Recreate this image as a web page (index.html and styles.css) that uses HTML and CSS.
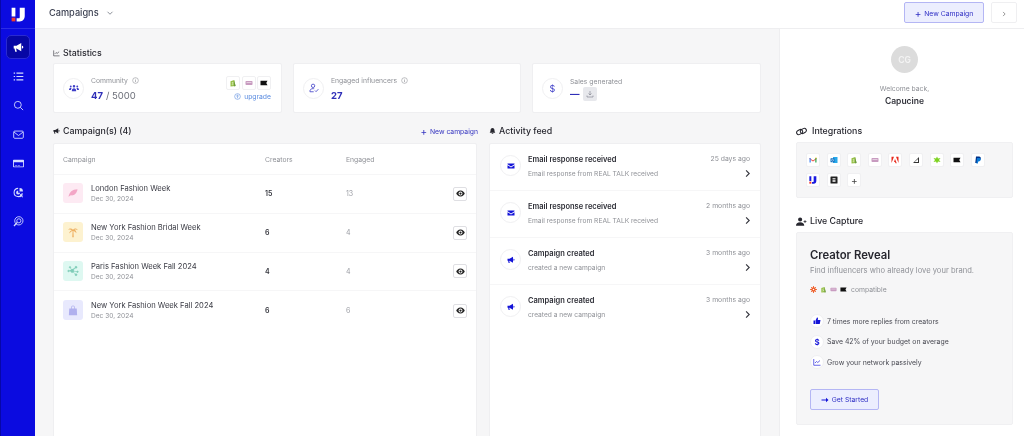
FILE: index.html
```html
<!DOCTYPE html>
<html lang="en">
<head>
  <meta charset="UTF-8">
  <meta name="viewport" content="width=device-width, initial-scale=1.0">
  <title>Campaigns</title>
  <link rel="stylesheet" href="styles.css">
</head>
<body>
  <svg class="sprite" width="0" height="0">
    <symbol id="i-mega" viewBox="0 0 16 16"><path fill="currentColor" d="M1 5.500h4l7-4v12l-7-4H4.500l1 4.500H3.200l-1-4.500H1zM13 5.500a2 2 0 0 1 0 4z"/></symbol>
    <symbol id="i-mail" viewBox="0 0 16 16"><path fill="currentColor" d="M1 3h14v1.500L8 9 1 4.500zM1 6.300l7 4.500 7-4.500V13H1z"/></symbol>
    <symbol id="i-eye" viewBox="0 0 16 16"><path fill="currentColor" fill-rule="evenodd" d="M8 2.500c4 0 7.500 4 7.500 5.500s-3.500 5.500-7.500 5.500S.5 9.500.5 8 4 2.500 8 2.500zm0 2a3.500 3.500 0 1 0 0 7 3.500 3.500 0 0 0 0-7zm0 1.500a2 2 0 1 1 0 4 2 2 0 0 1 0-4z"/></symbol>
    <symbol id="i-chev" viewBox="0 0 16 16"><path fill="none" stroke="currentColor" stroke-width="2" d="M5.500 2.500 11 8l-5.500 5.500"/></symbol>
    <symbol id="i-info" viewBox="0 0 16 16"><circle cx="8" cy="8" r="6.500" fill="none" stroke="currentColor" stroke-width="1.300"/><path stroke="currentColor" stroke-width="1.500" d="M8 7v4.500M8 4.200v1.500"/></symbol>
    <symbol id="i-shop" viewBox="0 0 16 16"><path fill="#95bf47" d="M3 4.500 10.500 2l2.500 12-10 1z"/><path fill="#5e8e3e" d="M10.500 2 13 14l-2.500 1z"/><path fill="none" stroke="#fff" stroke-width="1.200" d="M8.500 7C7 6.300 6 7 6.500 8s2 1 1.500 2.500-2 1-2.500.5"/></symbol>
    <symbol id="i-woo" viewBox="0 0 16 16"><rect x="1" y="4" width="14" height="8" rx="1.500" fill="#c89bc0"/><path stroke="#fff" d="M3 7h10"/></symbol>
    <symbol id="i-black" viewBox="0 0 16 16"><path fill="#111" d="M1 3.500h14l-2.500 4.500 2.500 4.500H1z"/></symbol>
    <symbol id="i-logo" viewBox="0 0 24 24"><path fill="currentColor" d="M1 1h6v14H1zM14 1h8v13c0 5-3 9-8 9H9v-5h3c2 0 2-1 2-3z"/><rect x="1" y="17" width="6" height="6" fill="#f03a2e"/></symbol>
  </svg>

  <div class="app">
    <nav class="sidebar">
      <div class="logo"><svg class="logo-mark"><use href="#i-logo"/></svg></div>
      <a class="nav-item active"><svg><use href="#i-mega"/></svg></a>
      <a class="nav-item"><svg viewBox="0 0 16 16"><path stroke="currentColor" stroke-width="1.700" d="M5 3h10M5 8h10M5 13h10M1 3h2M1 8h2M1 13h2"/></svg></a>
      <a class="nav-item"><svg viewBox="0 0 16 16" fill="none" stroke="currentColor" stroke-width="1.300"><circle cx="7" cy="7" r="5"/><path d="m10.700 10.700 4 4"/></svg></a>
      <a class="nav-item"><svg viewBox="0 0 16 16" fill="none" stroke="currentColor" stroke-width="1.300"><rect x="1" y="3" width="14" height="10.500" rx="1.500"/><path d="m1.500 4.500 6.500 5 6.500-5"/></svg></a>
      <a class="nav-item"><svg viewBox="0 0 16 16"><path fill="currentColor" fill-rule="evenodd" d="M1 2.500h14a1 1 0 0 1 1 1v9a1 1 0 0 1-1 1H1a1 1 0 0 1-1-1v-9a1 1 0 0 1 1-1zM1.300 6v6.200h13.400V6zM3 10h3v1H3zM7 10h3v1H7z"/></svg></a>
      <a class="nav-item"><svg viewBox="0 0 16 16"><path fill="none" stroke="currentColor" stroke-width="1.500" d="M7.500 2a6 6 0 1 0 6 7"/><path fill="currentColor" d="M7.500 5a3 3 0 1 0 3 3.500h-3zM9.500 1.500a5 5 0 0 1 5 5h-5zM10 10l5 1.500-2 1 1.500 2-1 .8-1.500-2-1.200 2z"/></svg></a>
      <a class="nav-item"><svg viewBox="0 0 16 16" fill="none" stroke="currentColor" stroke-width="1.300"><circle cx="8.500" cy="7" r="6"/><circle cx="8.500" cy="7" r="3"/><path stroke-width="1.800" d="m6 9.500-4.500 5"/></svg></a>
    </nav>

    <div class="content">
      <header class="topbar">
        <div class="page-title">Campaigns <svg class="caret" viewBox="0 0 16 16"><path fill="none" stroke="currentColor" stroke-width="1.500" d="m3 5.500 5 5 5-5"/></svg></div>
        <div class="top-actions">
          <button class="btn-primary top-new"><span class="plus">+</span> New Campaign</button>
          <button class="btn-next"><svg viewBox="0 0 16 16"><use href="#i-chev"/></svg></button>
        </div>
      </header>

      <div class="columns">
        <main class="main">
          <h2 class="heading"><svg viewBox="0 0 16 16" fill="none" stroke="currentColor" stroke-width="1.300"><path d="M1.500 2v12.500H15"/><path d="m4 10 3-3 2.500 2L14 5"/></svg> Statistics</h2>
          <section class="stats">
            <div class="stat-card">
              <span class="round-icon"><svg viewBox="0 0 16 16"><path fill="currentColor" d="M8 3a2 2 0 1 1 0 4 2 2 0 0 1 0-4zM4.500 13c0-3 1.500-4.500 3.500-4.500s3.500 1.500 3.500 4.500zM2.800 4a1.500 1.500 0 1 1 0 3 1.500 1.500 0 0 1 0-3zM13.200 4a1.500 1.500 0 1 1 0 3 1.500 1.500 0 0 1 0-3zM0 11c0-2 1-3 2.800-3 .5 0 1 .1 1.300.3-.6.7-.9 1.700-.9 2.700zM16 11c0-2-1-3-2.800-3-.5 0-1 .1-1.300.3.600.7.900 1.700.900 2.700z"/></svg></span>
              <div class="stat-text">
                <div class="stat-label">Community <svg class="info"><use href="#i-info"/></svg></div>
                <div class="stat-value"><b>47</b> <span>/ 5000</span></div>
              </div>
              <div class="stat-extra">
                <div class="mini-icons">
                  <span class="tile"><svg><use href="#i-shop"/></svg></span>
                  <span class="tile"><svg><use href="#i-woo"/></svg></span>
                  <span class="tile"><svg><use href="#i-black"/></svg></span>
                </div>
                <a class="upgrade"><svg viewBox="0 0 16 16" fill="none" stroke="currentColor" stroke-width="1.300"><circle cx="8" cy="8" r="6.500"/><path d="M8 12V5M5 7.500 8 4.700l3 2.800"/></svg> upgrade</a>
              </div>
            </div>
            <div class="stat-card">
              <span class="round-icon"><svg viewBox="0 0 16 16" fill="none" stroke="currentColor" stroke-width="1.300"><circle cx="6.500" cy="4.500" r="2.700"/><path d="M1.500 14v-1c0-2.500 2-4 5-4 .8 0 1.300.1 1.800.2M1.500 14h6M9.500 12l1.800 1.800 3.700-4"/></svg></span>
              <div class="stat-text">
                <div class="stat-label">Engaged influencers <svg class="info"><use href="#i-info"/></svg></div>
                <div class="stat-value"><b>27</b></div>
              </div>
            </div>
            <div class="stat-card">
              <span class="round-icon">$</span>
              <div class="stat-text">
                <div class="stat-label">Sales generated</div>
                <div class="stat-value sales"><b>—</b> <span class="sales-tile"><svg viewBox="0 0 16 16" fill="none" stroke="currentColor" stroke-width="1.300"><path d="M8 2v8M5 7l3 3 3-3M2 11v3h12v-3"/></svg></span></div>
              </div>
            </div>
          </section>

          <div class="lists">
            <section class="list-col">
              <div class="list-head">
                <h2 class="heading"><svg><use href="#i-mega"/></svg> Campaign(s) (4)</h2>
                <a class="new-link"><span class="plus">+</span> New campaign</a>
              </div>
              <div class="panel campaigns">
                <div class="row row-head">
                  <span>Campaign</span><span>Creators</span><span>Engaged</span><span></span>
                </div>
                <div class="row">
                  <div class="camp"><span class="thumb pink"><svg viewBox="0 0 16 16"><path fill="currentColor" d="M2 13c1-6 5-10 12-10-1 6-5 9-9 8z"/></svg></span><div><div class="camp-name">London Fashion Week</div><div class="camp-date">Dec 30, 2024</div></div></div>
                  <b>15</b><span class="muted">13</span><span class="eye"><svg><use href="#i-eye"/></svg></span>
                </div>
                <div class="row">
                  <div class="camp"><span class="thumb yellow"><svg viewBox="0 0 16 16"><path fill="currentColor" d="M8 5C6 2.500 3 3 1.500 5c2-.5 3.500-.5 5 .5C4.500 6 3 8 3 10c1.200-2 2.800-3 4.500-3.500L7 15h2l-.5-8.500c1.500.5 3 1.500 4 3 .2-2-1-3.800-2.500-4.500 1.500-.5 3-.3 4.500.5C13 3 10 2.500 8 5z"/></svg></span><div><div class="camp-name">New York Fashion Bridal Week</div><div class="camp-date">Dec 30, 2024</div></div></div>
                  <b>6</b><span class="muted">4</span><span class="eye"><svg><use href="#i-eye"/></svg></span>
                </div>
                <div class="row">
                  <div class="camp"><span class="thumb mint"><svg viewBox="0 0 16 16" fill="currentColor" stroke="currentColor" stroke-width=".8"><circle cx="7" cy="8" r="2"/><circle cx="2" cy="8" r="1"/><circle cx="12" cy="3" r="1.300"/><circle cx="14" cy="9" r="1"/><circle cx="12" cy="13" r="1.300"/><circle cx="4" cy="3" r="1"/><path d="M2 8h5l5-5M7 8l7 1M7 8l5 5M7 8 4 3"/></svg></span><div><div class="camp-name">Paris Fashion Week Fall 2024</div><div class="camp-date">Dec 30, 2024</div></div></div>
                  <b>4</b><span class="muted">4</span><span class="eye"><svg><use href="#i-eye"/></svg></span>
                </div>
                <div class="row">
                  <div class="camp"><span class="thumb lilac"><svg viewBox="0 0 16 16"><path fill="currentColor" d="M3 6h2.500V4.500a2.500 2.500 0 0 1 5 0V6H13l.5 9h-11zM6.500 6h3V4.500a1.500 1.500 0 0 0-3 0z"/></svg></span><div><div class="camp-name">New York Fashion Week Fall 2024</div><div class="camp-date">Dec 30, 2024</div></div></div>
                  <b>6</b><span class="muted">6</span><span class="eye"><svg><use href="#i-eye"/></svg></span>
                </div>
              </div>
            </section>

            <section class="feed-col">
              <div class="list-head">
                <h2 class="heading"><svg viewBox="0 0 16 16"><path fill="currentColor" d="M8 1c3 0 4.500 2.500 4.500 5 0 3 1 4.500 2 6H1.500c1-1.500 2-3 2-6C3.500 3.500 5 1 8 1zM6 13h4a2 2 0 0 1-4 0z"/></svg> Activity feed</h2>
              </div>
              <div class="panel feed">
                <div class="feed-row">
                  <span class="round-icon blue"><svg><use href="#i-mail"/></svg></span>
                  <div class="feed-text"><div class="feed-title">Email response received</div><div class="feed-sub">Email response from REAL TALK received</div></div>
                  <div class="feed-meta"><span>25 days ago</span><svg><use href="#i-chev"/></svg></div>
                </div>
                <div class="feed-row">
                  <span class="round-icon blue"><svg><use href="#i-mail"/></svg></span>
                  <div class="feed-text"><div class="feed-title">Email response received</div><div class="feed-sub">Email response from REAL TALK received</div></div>
                  <div class="feed-meta"><span>2 months ago</span><svg><use href="#i-chev"/></svg></div>
                </div>
                <div class="feed-row">
                  <span class="round-icon blue"><svg><use href="#i-mega"/></svg></span>
                  <div class="feed-text"><div class="feed-title">Campaign created</div><div class="feed-sub">created a new campaign</div></div>
                  <div class="feed-meta"><span>3 months ago</span><svg><use href="#i-chev"/></svg></div>
                </div>
                <div class="feed-row">
                  <span class="round-icon blue"><svg><use href="#i-mega"/></svg></span>
                  <div class="feed-text"><div class="feed-title">Campaign created</div><div class="feed-sub">created a new campaign</div></div>
                  <div class="feed-meta"><span>3 months ago</span><svg><use href="#i-chev"/></svg></div>
                </div>
              </div>
            </section>
          </div>
        </main>

        <aside class="aside">
          <div class="welcome">
            <div class="avatar">CG</div>
            <div class="welcome-text">Welcome back,</div>
            <div class="welcome-name">Capucine</div>
          </div>

          <h2 class="heading link-head"><svg viewBox="0 0 16 16" fill="none" stroke="currentColor" stroke-width="1.500"><rect x=".8" y="6" width="9" height="6" rx="3" transform="rotate(-30 5 9)"/><rect x="6.200" y="4" width="9" height="6" rx="3" transform="rotate(-30 11 7)"/></svg> Integrations</h2>
          <div class="box integrations">
            <span class="tile"><svg viewBox="0 0 16 16"><path fill="#ea4335" d="M1 4l7 5 7-5v2l-7 5-7-5z"/><path fill="#4285f4" d="M1 4h2.500v9H1z"/><path fill="#34a853" d="M12.500 4H15v9h-2.500z"/><path fill="#fbbc04" d="M13 3h2v2h-2z"/></svg></span>
            <span class="tile"><svg viewBox="0 0 16 16"><path fill="#28a8ea" d="M6 2h9v12H6z"/><rect x="1" y="4.500" width="8" height="8" rx="1" fill="#0f6cbd"/><circle cx="5" cy="8.500" r="2" fill="none" stroke="#fff"/></svg></span>
            <span class="tile"><svg><use href="#i-shop"/></svg></span>
            <span class="tile"><svg><use href="#i-woo"/></svg></span>
            <span class="tile"><svg viewBox="0 0 16 16"><path fill="#e8291c" d="M1 1.500h5L1 14zM10 1.500h5V14zM8 6l3.500 8.500H9L8 12H6z"/></svg></span>
            <span class="tile"><svg viewBox="0 0 16 16"><path fill="#333" d="M14 2v12H2zM5 12h7V6z" fill-rule="evenodd"/></svg></span>
            <span class="tile"><svg viewBox="0 0 16 16"><path fill="#7ed321" d="M8 1l2 4 5-1-3 4 3 4-5-1-2 4-2-4-5 1 3-4-3-4 5 1z"/></svg></span>
            <span class="tile"><svg><use href="#i-black"/></svg></span>
            <span class="tile"><svg viewBox="0 0 16 16"><path fill="#003087" d="M4 1h6c3 0 4 2 3.500 4S11 9 8.500 9H6.800L6 14H2.500z"/><path fill="#0a79d6" d="M6 4h5c2.500 0 3 1.500 2.600 3.200S11.500 11 9.500 11H8.300l-.6 4H4.800z"/></svg></span>
            <span class="tile logo-tile"><svg><use href="#i-logo"/></svg></span>
            <span class="tile"><svg viewBox="0 0 16 16"><rect x="1" y="1" width="14" height="14" rx="1" fill="#222"/><path fill="#fff" d="M5 4h6v3H5zM5 8h6v4H5z" opacity=".75"/></svg></span>
            <span class="tile tile-plus">+</span>
          </div>

          <h2 class="heading capture-head"><svg viewBox="0 0 16 16"><path fill="currentColor" d="M6 2a3 3 0 1 1 0 6 3 3 0 0 1 0-6zM0 14c0-3 2-5 6-5s6 2 6 5zM12.500 6h1.200v1.500h1.500v1.100h-1.500v1.500h-1.200V8.600H11V7.500h1.500z"/></svg> Live Capture</h2>
          <div class="box reveal">
            <div class="reveal-title">Creator Reveal</div>
            <div class="reveal-sub">Find influencers who already love your brand.</div>
            <div class="compat">
              <svg viewBox="0 0 16 16"><path stroke="#ee5a24" stroke-width="2" d="M8 0v16M0 8h16M2.500 2.500l11 11M13.500 2.500l-11 11"/><circle cx="8" cy="8" r="5" fill="#ee5a24"/><circle cx="8" cy="8" r="1.800" fill="#fff"/></svg>
              <svg><use href="#i-shop"/></svg>
              <svg><use href="#i-woo"/></svg>
              <svg><use href="#i-black"/></svg>
              <span>compatible</span>
            </div>
            <ul class="perks">
              <li><span class="round-icon blue"><svg viewBox="0 0 16 16"><path fill="currentColor" d="M1 7h3v7H1zM5 7l3-6c1.500 0 2 1 2 2l-.5 3H15l-1.500 8H5z"/></svg></span> 7 times more replies from creators</li>
              <li><span class="round-icon blue dollar">$</span> Save 42% of your budget on average</li>
              <li><span class="round-icon blue"><svg viewBox="0 0 16 16" fill="none" stroke="currentColor" stroke-width="1.300"><path d="M1.500 2v12.500H15"/><path d="m4 10 3-3 2.500 2L14 5"/></svg></span> Grow your network passively</li>
            </ul>
            <button class="btn-primary start"><svg viewBox="0 0 16 16"><path fill="currentColor" d="M1 7h9V3.500L15 8l-5 4.500V9H1z"/></svg> Get Started</button>
          </div>
        </aside>
      </div>
    </div>
  </div>
</body>
</html>
```

FILE: styles.css
```css
* {
  box-sizing: border-box;
}
body {
  margin: 0;
  height: 436px;
  overflow: hidden;
  font-family: 'Inter', 'Liberation Sans', sans-serif;
  color: #27272f;
  background: #fff;
}
.sprite {
  position: absolute;
}
h2 {
  margin: 0;
}
.app {
  display: flex;
  height: 436px;
  filter: blur(.3px);
  will-change: transform;
}

/* sidebar */
.sidebar {
  width: 35px;
  flex: none;
  background: #0b0be0;
  border-left: 1px solid #0707a8;
  display: flex;
  flex-direction: column;
  align-items: center;
  color: #d5dcff;
}
.logo {
  width: 100%;
  height: 29px;
  border-bottom: 1px solid #2c2ce6;
  display: flex;
  align-items: center;
  justify-content: center;
  margin-bottom: 6px;
}
.logo-mark {
  width: 15px;
  height: 15px;
  color: #fff;
}
.nav-item {
  width: 24px;
  height: 24px;
  margin-bottom: 5px;
  display: flex;
  align-items: center;
  justify-content: center;
  border-radius: 5px;
  border: 1px solid transparent;
}
.nav-item svg {
  width: 11px;
  height: 11px;
}
.nav-item.active {
  background: #0707a5;
  border-color: #2a2ad0;
  color: #fff;
}

/* top bar */
.content {
  flex: 1;
  display: flex;
  flex-direction: column;
  min-width: 0;
}
.topbar {
  height: 29px;
  flex: none;
  border-bottom: 1px solid #eeeef0;
  display: flex;
  align-items: flex-start;
  justify-content: space-between;
  padding: 2px 7px 0 14px;
}
.page-title {
  height: 21px;
  font-size: 9.200px;
  font-weight: 500;
  color: #3a3f50;
  display: flex;
  align-items: center;
  gap: 7px;
}
.caret {
  width: 8px;
  height: 8px;
  color: #666b78;
}
.top-actions {
  display: flex;
  gap: 7px;
}
.btn-primary {
  font-family: inherit;
  font-size: 6.800px;
  color: #2f2fc4;
  background: #eceefe;
  border: 1px solid #b4b6f4;
  border-radius: 2px;
}
.top-new {
  width: 80px;
  height: 21px;
  padding: 0;
}
.plus {
  font-size: 10px;
  line-height: 1;
  vertical-align: -1px;
  margin-right: 1px;
}
.btn-next {
  width: 26px;
  height: 21px;
  padding: 0;
  background: #fff;
  border: 1px solid #efeff1;
  border-radius: 2px;
  color: #777;
}
.btn-next svg {
  width: 6px;
  height: 6px;
}

/* main column */
.columns {
  flex: 1;
  display: flex;
  min-height: 0;
}
.main {
  width: 744px;
  flex: none;
  background: #f6f6f7;
  padding: 18px 18px 0 18px;
  display: flex;
  flex-direction: column;
  overflow: hidden;
}
.heading {
  font-size: 8.800px;
  font-weight: 500;
  color: #27272f;
  display: flex;
  align-items: center;
  gap: 3px;
  line-height: 12px;
}
.heading svg {
  width: 7px;
  height: 8px;
}
.stats {
  display: grid;
  grid-template-columns: 229px 228px 229px;
  gap: 11px;
  margin-top: 4px;
}
.stat-card {
  height: 50px;
  background: #fff;
  border: 1px solid #efeff1;
  border-radius: 2px;
  display: flex;
  align-items: center;
  padding: 0 10px 0 9px;
  gap: 7px;
}
.round-icon {
  width: 21px;
  height: 21px;
  flex: none;
  border-radius: 50%;
  border: 1px solid #f0f0f2;
  background: #fff;
  display: flex;
  align-items: center;
  justify-content: center;
  color: #3f3fc8;
  font-size: 9px;
}
.round-icon svg {
  width: 10px;
  height: 10px;
}
.stat-text {
  flex: 1;
  padding-top: 1px;
}
.stat-label {
  font-size: 6.800px;
  color: #8f9197;
  display: flex;
  align-items: center;
  gap: 4px;
  line-height: 10px;
}
.info {
  width: 7px;
  height: 7px;
}
.stat-value {
  margin-top: 3px;
  font-size: 9.500px;
  line-height: 13px;
  color: #6b6e78;
  display: flex;
  gap: 3px;
  align-items: center;
}
.stat-value b {
  color: #2f2fb8;
  font-weight: 700;
}
.sales-tile {
  width: 14px;
  height: 14px;
  background: #e7e8ec;
  border-radius: 2px;
  display: flex;
  align-items: center;
  justify-content: center;
  color: #80838e;
}
.sales-tile svg {
  width: 8px;
  height: 8px;
}
.sales {
  margin-top: 0;
}
.stat-extra {
  display: flex;
  flex-direction: column;
  align-items: flex-end;
  gap: 2px;
}
.mini-icons {
  display: flex;
  gap: 1.500px;
}
.tile {
  width: 14px;
  height: 14px;
  background: #fff;
  border: 1px solid #f0f0f2;
  border-radius: 2px;
  display: flex;
  align-items: center;
  justify-content: center;
}
.tile svg {
  width: 8px;
  height: 8px;
}
.upgrade {
  font-size: 6.800px;
  color: #5b8ce0;
  display: flex;
  align-items: center;
  gap: 3px;
}
.upgrade svg {
  width: 7px;
  height: 7px;
}

/* lists */
.lists {
  display: flex;
  gap: 12px;
  margin-top: 12px;
  margin-bottom: -6px;
  flex: 1;
  min-height: 0;
}
.list-col {
  width: 424px;
  flex: none;
  display: flex;
  flex-direction: column;
}
.feed-col {
  flex: 1;
  display: flex;
  flex-direction: column;
}
.list-head {
  height: 12px;
  display: flex;
  align-items: center;
  justify-content: space-between;
  margin-bottom: 6px;
}
.new-link {
  font-size: 6.800px;
  color: #3434c0;
  margin-right: -1px;
}
.panel {
  flex: 1;
  background: #fff;
  border: 1px solid #efeff1;
  border-radius: 2px;
}
.row {
  display: grid;
  grid-template-columns: 202px 81px 1fr 24px;
  align-items: center;
  height: 38.800px;
  padding: 0 9px;
  font-size: 7px;
  color: #33343c;
  border-bottom: 1px solid #f6f6f7;
}
.row:last-child {
  border-bottom: none;
}
.row-head {
  height: 31px;
  color: #8f9197;
  font-size: 6.800px;
}
.row b {
  font-weight: 600;
}
.muted {
  color: #9a9ca3;
}
.camp {
  display: flex;
  align-items: center;
  gap: 8px;
}
.thumb {
  width: 20px;
  height: 20px;
  margin-top: -1px;
  border-radius: 3px;
  display: flex;
  align-items: center;
  justify-content: center;
}
.thumb svg {
  width: 12px;
  height: 12px;
}
.pink {
  background: #fdeaf3;
  color: #f3a6c6;
}
.yellow {
  background: #fdf2d0;
  color: #eeb062;
}
.mint {
  background: #def8f1;
  color: #7fcdb8;
}
.lilac {
  background: #e8e9fd;
  color: #b0b0ee;
}
.camp-name {
  font-size: 7.600px;
  color: #3a3b44;
  line-height: 11px;
}
.camp-date {
  font-size: 6.600px;
  color: #8f9197;
  margin-top: 1px;
  line-height: 9px;
}
.eye {
  width: 14px;
  height: 14px;
  justify-self: end;
  border: 1px solid #dfdfe3;
  border-radius: 2px;
  display: flex;
  align-items: center;
  justify-content: center;
  color: #222;
}
.eye svg {
  width: 9px;
  height: 9px;
}

/* feed */
.feed-row {
  display: flex;
  align-items: flex-start;
  height: 47px;
  padding: 10px 10px 0;
  gap: 7px;
  border-bottom: 1px solid #f6f6f7;
}
.feed-row:last-child {
  border-bottom: none;
}
.feed-row .round-icon {
  margin-top: 1px;
}
.feed-row .round-icon svg {
  width: 8px;
  height: 8px;
}
.blue {
  color: #1414d8;
}
.feed-text {
  flex: 1;
}
.feed-title {
  font-size: 7.500px;
  font-weight: 600;
  color: #2c2d35;
  line-height: 11px;
}
.feed-sub {
  font-size: 6.650px;
  color: #8f9197;
  margin-top: 5px;
  line-height: 9px;
}
.feed-meta {
  display: flex;
  flex-direction: column;
  align-items: flex-end;
  gap: 5px;
  font-size: 6.800px;
  color: #8f9197;
  line-height: 10px;
}
.feed-meta svg {
  width: 9px;
  height: 9px;
  margin-right: -2px;
  color: #33343c;
}

/* right column */
.aside {
  flex: 1;
  border-left: 1px solid #eeeef0;
  background: #fff;
  padding: 0 11px 0 16px;
  min-width: 0;
}
.welcome {
  display: flex;
  flex-direction: column;
  align-items: center;
  padding-top: 17px;
  height: 96px;
}
.avatar {
  width: 27px;
  height: 27px;
  border-radius: 50%;
  background: #dcdcdc;
  color: #f4f4f4;
  font-size: 8.500px;
  font-weight: 600;
  display: flex;
  align-items: center;
  justify-content: center;
}
.welcome-text {
  font-size: 6.800px;
  color: #8f9197;
  margin-top: 11px;
  line-height: 10px;
}
.welcome-name {
  font-size: 8.500px;
  font-weight: 600;
  color: #33343c;
  margin-top: 2px;
  line-height: 11px;
}
.link-head {
  gap: 5px;
}
.link-head svg,
.capture-head svg {
  width: 11px;
  height: 11px;
}
.box {
  background: #f6f6f7;
  border: 1px solid #f0f0f2;
  border-radius: 2px;
}
.integrations {
  margin-top: 5px;
  height: 56px;
  padding: 10px 9px;
  display: flex;
  flex-wrap: wrap;
  gap: 6px 6.600px;
  align-content: flex-start;
}
.tile-plus {
  font-size: 10px;
  color: #444;
}
.logo-tile {
  color: #1a1ae0;
}
.capture-head {
  margin-top: 17px;
}
.reveal {
  margin-top: 5px;
  height: 193px;
  padding: 14px 13px;
}
.reveal-title {
  font-size: 11.300px;
  font-weight: 600;
  color: #27272f;
  line-height: 16px;
}
.reveal-sub {
  font-size: 7.600px;
  color: #8f9197;
  margin-top: 2px;
  line-height: 11px;
}
.compat {
  display: flex;
  align-items: center;
  gap: 3px;
  margin-top: 9px;
  font-size: 6.800px;
  color: #8f9197;
}
.compat svg {
  width: 7px;
  height: 7px;
}
.compat span {
  margin-left: 1px;
}
.perks {
  list-style: none;
  margin: 20px 0 0;
  padding: 0;
  display: flex;
  flex-direction: column;
  gap: 6.500px;
}
.perks li {
  display: flex;
  align-items: center;
  gap: 3px;
  font-size: 6.900px;
  color: #4a4b54;
}
.perks .round-icon {
  width: 14px;
  height: 14px;
}
.perks .round-icon svg {
  width: 8px;
  height: 8px;
}
.dollar {
  font-size: 8px;
  font-weight: 600;
}
.start {
  width: 69px;
  height: 21px;
  margin-top: 20px;
  padding: 0;
  display: flex;
  align-items: center;
  justify-content: center;
  gap: 3px;
}
.start svg {
  width: 8px;
  height: 8px;
  color: #1414d8;
}
```
